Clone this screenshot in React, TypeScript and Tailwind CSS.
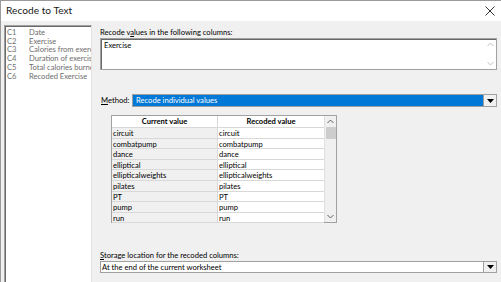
import React from 'react';

const columns = [
  { id: 'C1', name: 'Date' },
  { id: 'C2', name: 'Exercise' },
  { id: 'C3', name: 'Calories from exercise' },
  { id: 'C4', name: 'Duration of exercise' },
  { id: 'C5', name: 'Total calories burned' },
  { id: 'C6', name: 'Recoded Exercise' },
];

const values = ['circuit', 'combatpump', 'dance', 'elliptical', 'ellipticalweights', 'pilates', 'PT', 'pump', 'run'];

const Caret = ({ up }: { up?: boolean }) => (
  <svg width="7" height="5" viewBox="0 0 7 5" className="block">
    <path d={up ? 'M0.5 4 L3.5 1 L6.5 4' : 'M0.5 1 L3.5 4 L6.5 1'} fill="none" stroke="currentColor" strokeWidth="1" />
  </svg>
);

const DropButton = () => (
  <div className="w-[13px] h-full flex items-center justify-center bg-[#f0f0f0] border-l border-[#a0a0a0]">
    <svg width="7" height="4" viewBox="0 0 7 4" className="block">
      <path d="M0 0 H7 L3.5 4 Z" fill="#000" />
    </svg>
  </div>
);

export default function App() {
  return (
    <div
      className="w-[501px] h-[282px] bg-[#f0f0f0] border-t border-l border-[#9a9a9a] overflow-hidden flex flex-col text-[7.6px] text-black"
      style={{ fontFamily: 'Lato, "Open Sans", sans-serif' }}
    >
      {/* Title bar */}
      <div className="h-[20px] bg-white flex items-center justify-between pl-[5px] pr-[6px] shrink-0">
        <span className="text-[10.2px] text-[#1a1a1a]">Recode to Text</span>
        <svg width="10" height="10" viewBox="0 0 10 10" className="block">
          <path d="M0.5 0.5 L9.5 9.5 M9.5 0.5 L0.5 9.5" stroke="#333" strokeWidth="1" />
        </svg>
      </div>

      <div className="flex flex-1 min-h-0 pt-[4px] pl-[3px]">
        {/* Column list */}
        <div className="w-[88px] h-[300px] bg-white border border-[#a0a0a0] border-r-[#e3e3e3] shadow-[inset_1px_1px_0_#696969] pl-[2px] pt-[2px] leading-[8.7px] text-[#6d6d6d] shrink-0 overflow-hidden">
          {columns.map((c) => (
            <div key={c.id} className="flex whitespace-nowrap">
              <span className="w-[22px] shrink-0">{c.id}</span>
              <span className="truncate [text-overflow:clip]">{c.name}</span>
            </div>
          ))}
        </div>

        {/* Right side */}
        <div className="flex-1 pl-[8px] pr-[4px] flex flex-col">
          <div className="leading-[10px] mt-[2px]">
            Recode v<span className="underline">a</span>lues in the following columns:
          </div>
          <div className="h-[32px] mt-[1px] bg-white border border-[#a0a0a0] shadow-[inset_1px_1px_0_#696969] flex">
            <div className="flex-1 pl-[3px] pt-[1px] leading-[10px]">Exercise</div>
            <div className="w-[12px] flex flex-col justify-between items-center py-[3px] text-[#c0c0c0]">
              <Caret up />
              <Caret />
            </div>
          </div>

          {/* Method */}
          <div className="flex items-center mt-[24px] h-[13px]">
            <span className="w-[32px] shrink-0 pl-[1px]">
              <span className="underline">M</span>ethod:
            </span>
            <div className="flex-1 h-[13px] flex border border-[#a0a0a0] bg-[#0078d7]">
              <div className="flex-1 text-white pl-[3px] leading-[11px]">Recode individual values</div>
              <DropButton />
            </div>
          </div>

          {/* Table */}
          <div className="ml-[11px] mt-[8px] w-[226px] h-[108px] border border-[#a0a0a0] bg-[#f0f0f0] flex">
            <div className="flex-1 flex flex-col">
              <div className="flex h-[12px] bg-white border-b border-[#d8d8d8] font-bold leading-[11px]">
                <div className="w-[106px] text-center border-r border-[#d8d8d8]">Current value</div>
                <div className="flex-1 text-center">Recoded value</div>
              </div>
              {values.map((v) => (
                <div key={v} className="flex h-[10.6px] border-b border-[#d8d8d8] leading-[10px]">
                  <div className="w-[106px] pl-[1px] bg-[#f0f0f0] border-r border-[#d8d8d8]">{v}</div>
                  <div className="flex-1 pl-[1px] bg-white">{v}</div>
                </div>
              ))}
            </div>
            <div className="w-[12px] bg-[#f0f0f0] border-l border-[#e0e0e0] flex flex-col items-center text-[#606060]">
              <div className="h-[11px] flex items-center justify-center">
                <Caret up />
              </div>
              <div className="w-[10px] h-[12px] bg-[#cdcdcd]" />
              <div className="flex-1" />
              <div className="h-[11px] flex items-center justify-center">
                <Caret />
              </div>
            </div>
          </div>

          {/* Storage */}
          <div className="mt-[27px] leading-[10px]">
            <span className="underline">S</span>torage location for the recoded columns:
          </div>
          <div className="h-[12px] mt-[1px] bg-white border border-[#a0a0a0] flex">
            <div className="flex-1 pl-[1px] leading-[10px]">At the end of the current worksheet</div>
            <DropButton />
          </div>
        </div>
      </div>
    </div>
  );
}
